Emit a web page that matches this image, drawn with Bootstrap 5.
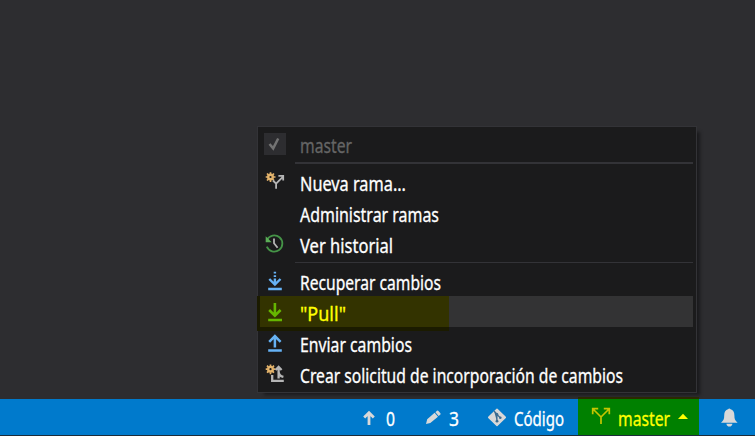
<!DOCTYPE html>
<html lang="es">
<head>
<meta charset="utf-8">
<meta name="viewport" content="width=device-width, initial-scale=1">
<title>Menú de ramas</title>
<link href="https://cdn.jsdelivr.net/npm/bootstrap@5.3.0/dist/css/bootstrap.min.css" rel="stylesheet">
<style>
body{background:#2d2d30;font-family:"Noto Sans","Open Sans",sans-serif;font-size:19px;color:#fff;width:755px;height:436px;overflow:hidden}
.branch-menu{left:257px;top:126px;width:440px;height:267px;background:#1b1b1c;border:1px solid #333337;padding:1px 3px 0 2px;box-shadow:5px 4px 3px -2px #1b1b1d;z-index:2}
.entry{height:31px;position:relative}
.entry .glyph{width:30px;height:31px;flex:none;margin-right:10px}
.fit{display:inline-block;white-space:nowrap;transform-origin:0 50%;line-height:31px;-webkit-text-stroke:.3px currentColor}
.entry .fit{position:relative;top:3px}
.rule{margin-left:35px;height:7px;padding-top:3px}
.rule::before{content:"";display:block;height:2px;background:#333337}
.rule.thin{height:6px}
.rule.thin::before{height:1px}
.hovered{background:#333334;color:#ffff00}
.hovered::before{content:"";position:absolute;left:-3px;top:0;width:192px;height:35px;background:#1b1b00}
.hovered::after{content:"";position:absolute;left:0;top:0;width:189px;height:31px;background:#333300}
.hovered>*{z-index:1}
.hovered .glyph{position:relative}
.off{color:#656565}
.status{height:37px;background:#007acc;border-bottom:1px solid #1c2c39;position:relative}
.status svg{margin-top:1px}
.status .fit{line-height:36px;position:relative;top:2px}
.branch{left:578px;top:-2px;width:121px;height:38px;background:#008000;border-top:2px solid #2c2c00;color:#ffff00}
.branch svg{margin-top:0}
</style>
<script src="https://cdn.jsdelivr.net/npm/bootstrap@5.3.0/dist/js/bootstrap.bundle.min.js"></script>
</head>
<body class="d-flex flex-column justify-content-end">
<div class="branch-menu position-absolute" role="menu">
  <div class="entry d-flex off">
    <svg class="glyph" viewBox="0 0 30 31"><path fill="#2d2d30" d="M4 5h22v22H4z"/><path fill="none" stroke="#737373" stroke-width="2.5" d="M9.5 16l3.7 4.4 5-9.9"/></svg>
    <span class="fit" data-w="52">master</span>
  </div>
  <div class="rule"></div>
  <div class="entry d-flex">
    <svg class="glyph" viewBox="0 0 30 31"><g fill="none" stroke="#e3b36b"><circle cx="10.5" cy="11" r="2.3" stroke-width="2.4"/><path stroke-width="1.7" d="M10.5 6.2v2M10.5 14v2M5.7 11h2M13.5 11h2M7 7.5l1.4 1.4M12.6 13.1l1.4 1.4M14 7.5l-1.4 1.4M8.4 13.1L7 14.5"/></g><path fill="none" stroke="#b5b5b5" stroke-width="1.8" d="M13 14.5l3.1 3.1v5.2M16.1 17.6l7-7M18.4 9.8h4.8v4.8"/></svg>
    <span class="fit" data-w="106">Nueva rama...</span>
  </div>
  <div class="entry d-flex"><span class="glyph"></span><span class="fit" data-w="139">Administrar ramas</span></div>
  <div class="entry d-flex">
    <svg class="glyph" viewBox="0 0 30 31"><path fill="none" stroke="#459447" stroke-width="1.8" d="M7 11.9a8.1 8.1 0 1 1-.2 6.8"/><path fill="#5bae57" d="M5.7 8.3v6h6z"/><path fill="none" stroke="#b5b5b5" stroke-width="1.8" d="M14 10.5v4.7l3.6 4.6"/></svg>
    <span class="fit" data-w="93">Ver historial</span>
  </div>
  <div class="rule thin"></div>
  <div class="entry d-flex">
    <svg class="glyph" viewBox="0 0 30 31"><g fill="none" stroke="#66b2f5" stroke-width="2.4"><path d="M14.9 6.8v1.8M14.9 10.2v1.7M14.9 13.4v6.8M9.3 14l5.6 5.6 5.6-5.6M8.2 24h13.6"/></g></svg>
    <span class="fit" data-w="141">Recuperar cambios</span>
  </div>
  <div class="entry d-flex hovered">
    <svg class="glyph" viewBox="0 0 30 31"><g fill="none" stroke="#65b600" stroke-width="2.6"><path d="M14.9 7v13M9.2 14l5.7 5.7 5.7-5.7M8.2 24h13.8"/></g></svg>
    <span class="fit" data-w="46">"Pull"</span>
  </div>
  <div class="entry d-flex">
    <svg class="glyph" viewBox="0 0 30 31"><g fill="none" stroke="#66b2f5" stroke-width="2.5"><path d="M14.9 20.5V9.5M9.2 14.8l5.7-5.7 5.7 5.7M8.2 23.5h13.6"/></g></svg>
    <span class="fit" data-w="112">Enviar cambios</span>
  </div>
  <div class="entry d-flex">
    <svg class="glyph" viewBox="0 0 30 31"><g fill="none" stroke="#e3b36b"><circle cx="10.5" cy="11.2" r="2.3" stroke-width="2.4"/><path stroke-width="1.7" d="M10.5 6.4v2M10.5 14.2v2M5.7 11.2h2M13.5 11.2h2M7 7.7l1.4 1.4M12.6 13.3l1.4 1.4M14 7.7l-1.4 1.4M8.4 13.3L7 14.7"/></g><g fill="none" stroke="#b5b5b5" stroke-width="2.3"><path d="M12.2 17v5.8h11.6"/><path d="M18.6 20.4V10M15.6 12l3-3 3 3M18.6 13.4c0 3 1.6 4.7 4.8 5.4"/></g></svg>
    <span class="fit" data-w="323">Crear solicitud de incorporación de cambios</span>
  </div>
</div>

<footer class="status d-flex">
  <svg width="386" height="35" viewBox="0 0 386 35" class="flex-shrink-0"><path fill="none" stroke="#d8d8d8" stroke-width="2.8" d="M369 25V13.5M364.2 17.6l4.8-4.8 4.8 4.8"/></svg>
  <span class="fit" data-w="9">0</span>
  <svg width="54" height="35" viewBox="395 0 54 35" class="flex-shrink-0"><path fill="#d8d8d8" d="M426 24l1.2-4.8 7.4-6.4 3.4 4-7.7 6.2zM435.4 12.2l1.6-1.4q.8-.6 1.5.2l1.9 2.2q.6.8-.2 1.5l-1.6 1.3z"/></svg>
  <span class="fit" data-w="10">3</span>
  <svg width="55" height="35" viewBox="459 0 55 35" class="flex-shrink-0"><path fill="#d8d8d8" stroke="#d8d8d8" stroke-width="1.5" stroke-linejoin="round" d="M497 9.3l8.3 8.1-8.3 8.1-8.3-8.1z"/><g transform="translate(0 -1)" fill="#3c6c90"><path stroke="#3c6c90" stroke-width="1.1" d="M494 12l3 3v7.5M497 15.5l3 3"/><circle cx="497" cy="15.3" r="1.3"/><circle cx="497" cy="22.2" r="1.4"/><circle cx="500.3" cy="18.7" r="1.3"/></g></svg>
  <span class="fit" data-w="50">Código</span>
  <div class="branch position-absolute d-flex">
    <svg width="40" height="35" viewBox="578 0 40 35" class="flex-shrink-0"><path fill="none" stroke="#c5c500" stroke-width="1.7" d="M593 10l8 8v7M601 18l8-8M592.7 15.3V9.6h5.5M603.8 9.6h5.5v5.7"/></svg>
    <span class="fit" data-w="52">master</span>
    <svg width="29" height="35" viewBox="670 0 29 35" class="flex-shrink-0"><path fill="#ff0" d="M678 20l5-5.2 5 5.2z"/></svg>
  </div>
  <svg width="56" height="35" viewBox="699 0 56 35" class="position-absolute end-0"><path fill="#d8d8d8" d="M721 22.7c2.7-2.2 3.2-4 3.2-7.2 0-3.6 1.4-5.5 3.8-6.2q1.3-1.5 2.6 0c2.4.7 3.8 2.6 3.8 6.2 0 3.2.5 5 3.2 7.2zM726.4 23.8h6q-.4 2.8-3 2.8t-3-2.8z"/></svg>
</footer>
<script>
// Condense each label to its column width.
document.querySelectorAll('.fit').forEach(function (el) {
  var natural = el.getBoundingClientRect().width, w = +el.dataset.w;
  el.style.transform = 'scaleX(' + (w / natural) + ')';
  el.style.marginRight = (w - natural) + 'px';
  el.style.flexShrink = 0;
});
</script>
</body>
</html>
